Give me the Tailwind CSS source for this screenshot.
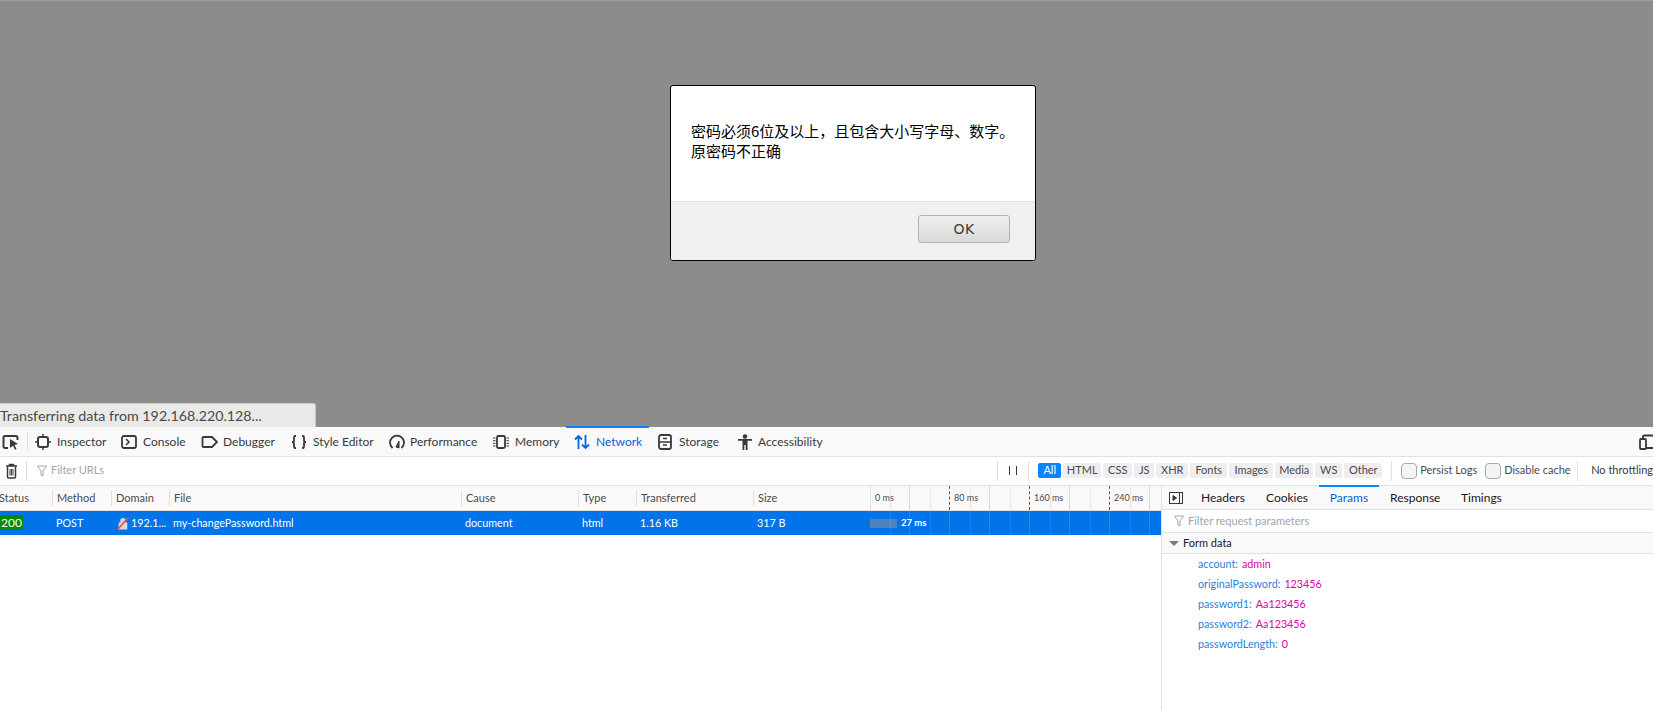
<!DOCTYPE html>
<html lang="zh">
<head>
<meta charset="utf-8">
<title>Network</title>
<script src="https://cdn.jsdelivr.net/npm/@tailwindcss/browser@4"></script>
</head>
<body class="m-0 overflow-hidden bg-white">
<div class="w-[1653px] h-[710px] flex flex-col overflow-hidden font-['Lato',sans-serif] text-[11px] text-[#4a4a4f]">

  <!-- page area -->
  <div class="relative h-[427px] shrink-0 bg-[#8c8c8c] border-t border-[#a0a0a0] flex flex-col items-center">
    <div class="mt-[84px] ml-[53px] w-[366px] h-[176px] bg-white border border-black rounded-[3px] flex flex-col overflow-hidden font-['Noto_Sans_CJK_SC',sans-serif] text-black">
      <div class="h-[116px] border-b border-[#e3e3e3] pt-[35px] pl-[20px] text-[15px] leading-[20px]">
        <p class="whitespace-nowrap">密码必须6位及以上，且包含大小写字母、数字<span class="font-['Noto_Sans_CJK_TC',sans-serif]">。</span></p>
        <p>原密码不正确</p>
      </div>
      <div class="flex-1 bg-[#f0f0f0] flex justify-end items-start pt-[13px] pr-[25px]">
        <button class="w-[92px] h-[28px] rounded-[3px] border border-[#b4b4b4] bg-gradient-to-b from-[#f0f0f0] to-[#d8d8d8] text-[14px] tracking-[0.5px] text-[#3c3c3c] font-['DejaVu_Sans',sans-serif]">OK</button>
      </div>
    </div>
    <div class="absolute left-0 bottom-0 w-[316px] h-[24px] bg-[#e9e9e7] border-t border-r border-[#c8c8c8] rounded-tr-[3px] text-[14.25px] leading-[23px] text-[#4a4a4a] whitespace-nowrap">Transferring data from 192.168.220.128...</div>
  </div>

  <!-- toolbox tabs -->
  <div class="h-[30px] shrink-0 bg-[#f9f9fa] border-b border-[#e0e0e1] flex items-stretch text-[#38383d] text-[12px] whitespace-nowrap">
    <div class="w-[27px] flex items-center pl-[2px]">
      <svg width="18" height="16" viewBox="0 0 18 16" fill="none"><path d="M6 14H3a1.500 1.500 0 0 1-1.500-1.500v-9A1.500 1.500 0 0 1 3 2h11a1.500 1.500 0 0 1 1.500 1.500V6" stroke="#38383d" stroke-width="2"/><path d="M8 5l8 5-3.500 1 2 4-1.500.7-2-4-3 2.300z" fill="#38383d"/></svg>
    </div>
    <div class="w-px my-[5px] bg-[#e0e0e1]"></div>
    <div class="w-[93px] pl-[7px] flex items-center gap-[6px]">
      <svg width="16" height="16" viewBox="0 0 16 16" fill="none" stroke="#38383d" stroke-width="2"><rect x="3" y="3" width="10" height="10" rx="2"/><path d="M8 0v3M8 13v3M0 8h3M13 8h3" stroke-width="1.500"/></svg><span>Inspector</span>
    </div>
    <div class="w-[80px] flex items-center gap-[6px]">
      <svg width="16" height="16" viewBox="0 0 16 16" fill="none" stroke="#38383d"><rect x="1" y="2" width="14" height="12" rx="2" stroke-width="1.800"/><path d="M5 5l3 3-3 3" stroke-width="1.500"/></svg><span>Console</span>
    </div>
    <div class="w-[90px] flex items-center gap-[5px]">
      <svg width="17" height="16" viewBox="0 0 17 16" fill="none" stroke="#38383d" stroke-width="1.800"><path d="M2.500 3h8.500l5 5-5 5H2.500a1 1 0 0 1-1-1V4a1 1 0 0 1 1-1z"/></svg><span>Debugger</span>
    </div>
    <div class="w-[98px] flex items-center gap-[6px]">
      <svg width="16" height="16" viewBox="0 0 16 16" fill="none" stroke="#38383d" stroke-width="1.800"><path d="M5 2H4C3 2 3 3 3 4v2.500C3 7.500 2 8 1 8c1 0 2 .5 2 1.500V12c0 1 0 2 1 2h1M11 2h1c1 0 1 1 1 2v2.500c0 1 1 1.500 2 1.500-1 0-2 .5-2 1.500V12c0 1 0 2-1 2h-1"/></svg><span>Style Editor</span>
    </div>
    <div class="w-[104px] flex items-center gap-[5px]">
      <svg width="16" height="16" viewBox="0 0 16 16" fill="none" stroke="#38383d"><path d="M3.500 14a7 7 0 1 1 9 0" stroke-width="1.800"/><path d="M7 13l3-6 0 7z" fill="#38383d"/></svg><span>Performance</span>
    </div>
    <div class="w-[73px] flex items-center gap-[6px]">
      <svg width="16" height="16" viewBox="0 0 16 16" fill="none" stroke="#38383d"><rect x="4" y="2" width="8" height="12" rx="1.500" stroke-width="1.800"/><path d="M0 4h2.500M0 6.700h2.500M0 9.300h2.500M0 12h2.500M13.500 4h2.500M13.500 6.700h2.500M13.500 9.300h2.500M13.500 12h2.500" stroke-width="1"/></svg><span>Memory</span>
    </div>
    <div class="w-[83px] relative -mt-px pl-[8px] flex items-center gap-[6px] border-t-2 border-[#0a84ff] text-[#0a60e0]">
      <svg width="16" height="16" viewBox="0 0 16 16" fill="none" stroke="#0a60e0" stroke-width="1.800"><path d="M4.500 15V2M1 5.500l3.500-3.500L8 5.500M11.500 1v13M8 10.500l3.500 3.500 3.500-3.500"/></svg><span>Network</span>
    </div>
    <div class="w-[88px] pl-[9px] flex items-center gap-[7px]">
      <svg width="14" height="16" viewBox="0 0 14 16" fill="none" stroke="#38383d"><rect x="1" y="1" width="12" height="14" rx="2" stroke-width="1.800"/><path d="M1 8h12M5 4.500h4M5 11h4" stroke-width="1.500"/></svg><span>Storage</span>
    </div>
    <div class="flex items-center gap-[5px]">
      <svg width="16" height="16" viewBox="0 0 16 16" fill="#38383d"><circle cx="8" cy="2.500" r="2.200"/><path d="M1 5h14v1.800h-4.500V16H8.700v-5H7.300v5H5.500V6.800H1z"/></svg><span>Accessibility</span>
    </div>
    <div class="ml-auto flex items-center">
      <svg width="14" height="16" viewBox="0 0 14 16" fill="none" stroke="#38383d" stroke-width="1.800"><rect x="1" y="5" width="6" height="10" rx="1"/><path d="M4 5V2.500a1 1 0 0 1 1-1h9M7 14h7"/></svg>
    </div>
  </div>

  <!-- filter bar -->
  <div class="h-[29px] shrink-0 pb-px bg-white border-b border-[#e0e0e1] flex items-center whitespace-nowrap">
    <div class="w-[26px] pl-[5px] flex items-center">
      <svg width="13" height="16" viewBox="0 0 13 16" fill="none" stroke="#38383d"><path d="M1 3h11M4.500 3V1.500h4V3" stroke-width="1.500"/><path d="M2.500 3.500v10.500a1 1 0 0 0 1 1h6a1 1 0 0 0 1-1V3.500" stroke-width="1.500"/><path d="M5 6v6.500M6.500 6v6.500M8 6v6.500" stroke-width="1"/></svg>
    </div>
    <div class="w-px h-[20px] bg-[#e0e0e1]"></div>
    <div class="w-[971px] pl-[10px] flex items-center gap-[4px] text-[#a4a4a6]">
      <svg width="10" height="12" viewBox="0 0 10 12" fill="none" stroke="#a4a4a6"><path d="M.5 1h9L6 6v5l-2-1V6z"/></svg><span>Filter URLs</span>
    </div>
    <div class="w-px h-[20px] bg-[#e0e0e1]"></div>
    <div class="w-[30px] flex justify-center gap-[6px]"><span class="w-px h-[9px] bg-[#38383d]"></span><span class="w-px h-[9px] bg-[#38383d]"></span></div>
    <div class="w-px h-[20px] bg-[#e0e0e1]"></div>
    <div class="ml-[9px] flex items-center gap-[2px] text-center leading-[14px] text-[#4a4a4f]">
      <span class="w-[23px] h-[15px] rounded-[2px] bg-[#0a84ff] text-white">All</span>
      <span class="w-[38px] h-[15px] rounded-[2px] bg-[#eeeeef]">HTML</span>
      <span class="w-[29px] h-[15px] rounded-[2px] bg-[#eeeeef]">CSS</span>
      <span class="w-[20px] h-[15px] rounded-[2px] bg-[#eeeeef]">JS</span>
      <span class="w-[32px] h-[15px] rounded-[2px] bg-[#eeeeef]">XHR</span>
      <span class="w-[37px] h-[15px] rounded-[2px] bg-[#eeeeef]">Fonts</span>
      <span class="w-[44px] h-[15px] rounded-[2px] bg-[#eeeeef]">Images</span>
      <span class="w-[38px] h-[15px] rounded-[2px] bg-[#eeeeef]">Media</span>
      <span class="w-[27px] h-[15px] rounded-[2px] bg-[#eeeeef]">WS</span>
      <span class="w-[38px] h-[15px] rounded-[2px] bg-[#eeeeef]">Other</span>
    </div>
    <div class="ml-[9px] w-px h-[20px] bg-[#e0e0e1]"></div>
    <div class="w-[93px] pl-[9px] flex items-center gap-[3px]"><span class="w-[16px] h-[16px] rounded-[4px] border border-[#a8a8a8] bg-[#f4f4f4]"></span><span>Persist Logs</span></div>
    <div class="w-[92px] flex items-center gap-[3px]"><span class="w-[16px] h-[16px] rounded-[4px] border border-[#a8a8a8] bg-[#f4f4f4]"></span><span>Disable cache</span></div>
    <div class="w-px h-[20px] bg-[#e0e0e1]"></div>
    <div class="pl-[13px] text-[#38383d]">No throttling</div>
  </div>

  <!-- panels -->
  <div class="flex-1 flex min-h-0">
    <div class="w-[1161px] shrink-0 flex flex-col">
      <div class="h-[25px] shrink-0 bg-[#f9f9fa] border-b border-[#e0e0e1] flex items-center whitespace-nowrap">
        <div class="w-[52px] -indent-px">Status</div>
        <div class="w-[59px] h-[16px] leading-[16px] border-l border-[#e0e0e1] pl-[4px]">Method</div>
        <div class="w-[58px] h-[16px] leading-[16px] border-l border-[#e0e0e1] pl-[4px]">Domain</div>
        <div class="w-[292px] h-[16px] leading-[16px] border-l border-[#e0e0e1] pl-[4px]">File</div>
        <div class="w-[117px] h-[16px] leading-[16px] border-l border-[#e0e0e1] pl-[4px]">Cause</div>
        <div class="w-[58px] h-[16px] leading-[16px] border-l border-[#e0e0e1] pl-[4px]">Type</div>
        <div class="w-[117px] h-[16px] leading-[16px] border-l border-[#e0e0e1] pl-[4px]">Transferred</div>
        <div class="w-[117px] h-[16px] leading-[16px] border-l border-[#e0e0e1] pl-[4px]">Size</div>
        <div class="relative w-[291px] h-full border-l border-[#e0e0e1] flex">
          <span class="w-[20px] border-r border-[#e9e9ea]"></span>
          <span class="w-[19px] border-r border-[#d8d8d9]"></span>
          <span class="w-[21px] border-r border-[#e9e9ea]"></span>
          <span class="w-[19px] border-r border-dashed border-[#5a5a5a]"></span>
          <span class="w-[21px] border-r border-[#e9e9ea]"></span>
          <span class="w-[19px] border-r border-[#d8d8d9]"></span>
          <span class="w-[21px] border-r border-[#e9e9ea]"></span>
          <span class="w-[19px] border-r border-dashed border-[#5a5a5a]"></span>
          <span class="w-[21px] border-r border-[#e9e9ea]"></span>
          <span class="w-[19px] border-r border-[#d8d8d9]"></span>
          <span class="w-[21px] border-r border-[#e9e9ea]"></span>
          <span class="w-[19px] border-r border-dashed border-[#5a5a5a]"></span>
          <span class="w-[21px] border-r border-[#e9e9ea]"></span>
          <span class="w-[19px] border-r border-[#d8d8d9]"></span>
          <span class="absolute left-[4px] top-[6px] text-[9px] leading-[12px]">0 ms</span>
          <span class="absolute left-[83px] top-[6px] text-[9px] leading-[12px]">80 ms</span>
          <span class="absolute left-[163px] top-[6px] text-[9px] leading-[12px]">160 ms</span>
          <span class="absolute left-[243px] top-[6px] text-[9px] leading-[12px]">240 ms</span>
        </div>
      </div>
      <div class="h-[24px] shrink-0 bg-[#0074e8] text-white text-[10.75px] flex items-center whitespace-nowrap">
        <div class="w-[56px]"><span class="inline-block w-[23px] h-[15px] leading-[15px] rounded-r-[3px] bg-[#058b00] text-center text-[12px]">200</span></div>
        <div class="w-[61px]">POST</div>
        <div class="w-[56px] flex items-center gap-[2px]">
          <svg width="12" height="13" viewBox="0 0 11 12"><path d="M3 5V3.500a2.500 2.500 0 0 1 5 0V5h1.500v6.500h-8V5z" fill="#d8d8d8"/><path d="M.5 11.500L10.500.5" stroke="#f0483e" stroke-width="1.500"/></svg><span>192.1...</span>
        </div>
        <div class="w-[292px]">my-changePassword.html</div>
        <div class="w-[117px]">document</div>
        <div class="w-[58px]">html</div>
        <div class="w-[117px]">1.16 KB</div>
        <div class="w-[113px]">317 B</div>
        <div class="relative w-[291px] h-full flex items-center">
          <span class="absolute inset-y-0 left-[20px] w-px bg-white/10"></span>
          <span class="absolute inset-y-0 left-[39px] w-px bg-white/15"></span>
          <span class="absolute inset-y-0 left-[60px] w-px bg-white/10"></span>
          <span class="absolute inset-y-0 left-[79px] w-px bg-white/15"></span>
          <span class="absolute inset-y-0 left-[100px] w-px bg-white/10"></span>
          <span class="absolute inset-y-0 left-[119px] w-px bg-white/15"></span>
          <span class="absolute inset-y-0 left-[140px] w-px bg-white/10"></span>
          <span class="absolute inset-y-0 left-[159px] w-px bg-white/15"></span>
          <span class="absolute inset-y-0 left-[180px] w-px bg-white/10"></span>
          <span class="absolute inset-y-0 left-[199px] w-px bg-white/15"></span>
          <span class="absolute inset-y-0 left-[220px] w-px bg-white/10"></span>
          <span class="absolute inset-y-0 left-[239px] w-px bg-white/15"></span>
          <span class="absolute inset-y-0 left-[260px] w-px bg-white/10"></span>
          <span class="absolute inset-y-0 left-[279px] w-px bg-white/15"></span>
          <span class="w-[27px] h-[9px] bg-[#5083bd]"></span>
          <span class="ml-[4px] text-[9.5px] font-bold">27 ms</span>
        </div>
      </div>
      <div class="flex-1 bg-white"></div>
    </div>

    <!-- sidebar -->
    <div class="flex-1 border-l border-[#e0e0e1] flex flex-col whitespace-nowrap">
      <div class="h-[24px] shrink-0 bg-[#f9f9fa] border-b border-[#e0e0e1] flex items-stretch text-[12px] text-[#18181a]">
        <div class="w-[39px] pl-[7px] flex items-center">
          <svg width="14" height="12" viewBox="0 0 14 12" fill="none" stroke="#38383d"><rect x=".5" y=".5" width="13" height="11"/><path d="M10.500 .5v11"/><path d="M4 3.500l3.500 2.500L4 8.500z" fill="#38383d"/></svg>
        </div>
        <div class="w-[65px] flex items-center">Headers</div>
        <div class="w-[53px] flex items-center">Cookies</div>
        <div class="w-[60px] -mt-px flex items-center justify-center border-t-2 border-[#0a84ff] text-[#0a60e0]">Params</div>
        <div class="w-[82px] pl-[11px] flex items-center">Response</div>
        <div class="flex items-center">Timings</div>
      </div>
      <div class="h-[23px] shrink-0 border-b border-[#e0e0e1] pl-[12px] flex items-center gap-[4px] text-[#a4a4a6]">
        <svg width="10" height="12" viewBox="0 0 10 12" fill="none" stroke="#a4a4a6"><path d="M.5 1h9L6 6v5l-2-1V6z"/></svg><span>Filter request parameters</span>
      </div>
      <div class="h-[21px] shrink-0 bg-[#f9f9fa] border-b border-[#e0e0e1] pl-[7px] flex items-center gap-[4px] text-[#18181a]">
        <span class="w-0 h-0 border-x-[5px] border-x-transparent border-t-[5px] border-t-[#7a7a7a]"></span><span>Form data</span>
      </div>
      <div class="pl-[36px] text-[#2a7fdb] text-[10.75px] leading-[20px]">
        <div class="flex gap-[4px]"><span>account:</span><span class="text-[#dd00a9]">admin</span></div>
        <div class="flex gap-[4px]"><span>originalPassword:</span><span class="text-[#dd00a9]">123456</span></div>
        <div class="flex gap-[4px]"><span>password1:</span><span class="text-[#dd00a9]">Aa123456</span></div>
        <div class="flex gap-[4px]"><span>password2:</span><span class="text-[#dd00a9]">Aa123456</span></div>
        <div class="flex gap-[4px]"><span>passwordLength:</span><span class="text-[#dd00a9]">0</span></div>
      </div>
    </div>
  </div>
</div>
</body>
</html>
